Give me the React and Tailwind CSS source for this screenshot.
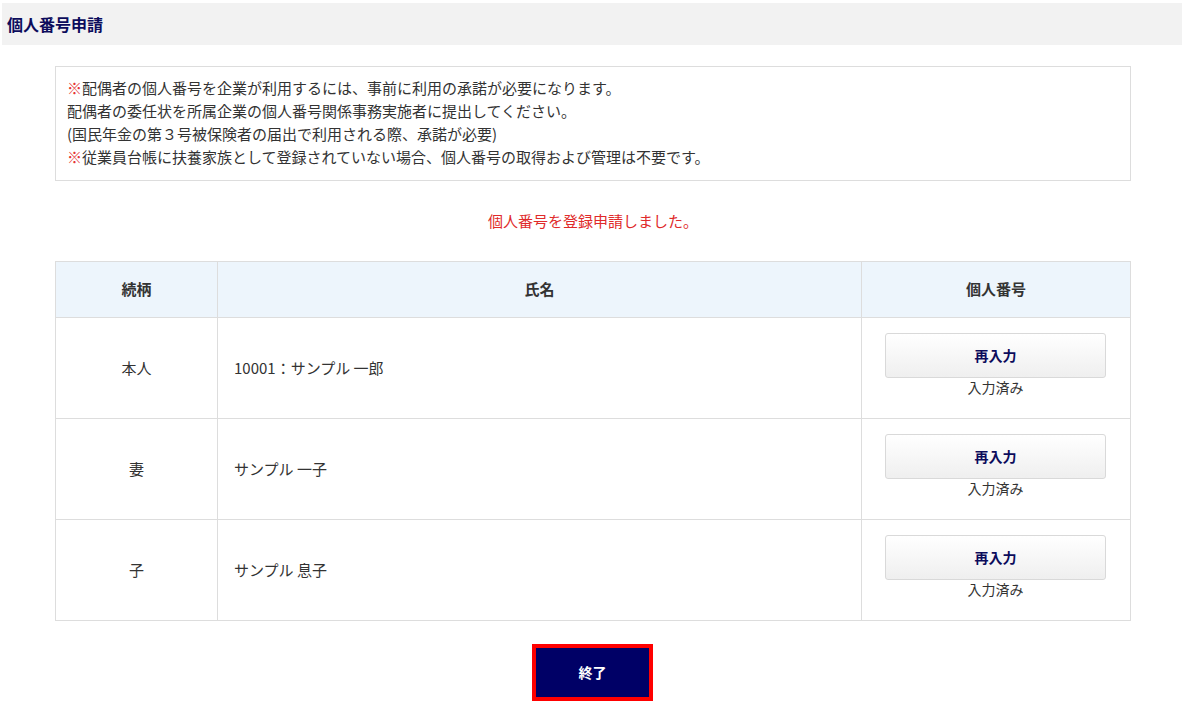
import React from "react";

const rows = [
  { rel: "本人", name: "10001：サンプル 一郎" },
  { rel: "妻", name: "サンプル 一子" },
  { rel: "子", name: "サンプル 息子" },
];

export default function App() {
  return (
    <div
      className="min-h-[711px] bg-white pt-[3px] pl-[2px] text-[15px] text-[#333]"
      style={{ fontFamily: '"Noto Sans CJK JP", "Noto Sans", sans-serif' }}
    >
      <div className="h-[42px] bg-[#f2f2f2] flex items-center px-[5px]">
        <h1 className="text-[16px] font-bold text-[#0c0c5c]">個人番号申請</h1>
      </div>

      <div className="pl-[53px] pr-[51px]">
        <div className="mt-[21px] border border-[#dddddd] px-[11px] pt-[9px] pb-[12px] leading-[23px]">
          <p><span className="text-[#e53333]">※</span>配偶者の個人番号を企業が利用するには、事前に利用の承諾が必要になります。</p>
          <p>配偶者の委任状を所属企業の個人番号関係事務実施者に提出してください。</p>
          <p>(国民年金の第３号被保険者の届出で利用される際、承諾が必要)</p>
          <p><span className="text-[#e53333]">※</span>従業員台帳に扶養家族として登録されていない場合、個人番号の取得および管理は不要です。</p>
        </div>

        <p className="mt-[29px] text-center text-[#e02a2a] leading-[22px]">個人番号を登録申請しました。</p>

        <table className="mt-[29px] w-full border-collapse">
          <thead>
            <tr className="bg-[#edf5fc] h-[56px]">
              <th className="w-[162px] border border-[#dddddd] font-bold text-[#333]">続柄</th>
              <th className="border border-[#dddddd] font-bold text-[#333]">氏名</th>
              <th className="w-[269px] border border-[#dddddd] font-bold text-[#333]">個人番号</th>
            </tr>
          </thead>
          <tbody>
            {rows.map((r) => (
              <tr key={r.rel} className="h-[101px]">
                <td className="border border-[#dddddd] text-center">{r.rel}</td>
                <td className="border border-[#dddddd] pl-[16px]">{r.name}</td>
                <td className="border border-[#dddddd] pl-[23px] pr-[24px] pb-[8px]">
                  <div className="flex flex-col items-center">
                    <button className="w-full h-[45px] rounded-[3px] border border-[#d9d9d9] bg-gradient-to-b from-white to-[#efefef] font-bold text-[#0c0c5c] text-[14px]">
                      再入力
                    </button>
                    <span className="leading-[18px] text-[14px]">入力済み</span>
                  </div>
                </td>
              </tr>
            ))}
          </tbody>
        </table>

        <div className="mt-[23px] flex justify-center pr-[1px]">
          <button className="w-[121px] h-[57px] border-[4px] border-[#ff0000] bg-[#000066] text-white font-bold text-[14px]">
            終了
          </button>
        </div>
      </div>
    </div>
  );
}
